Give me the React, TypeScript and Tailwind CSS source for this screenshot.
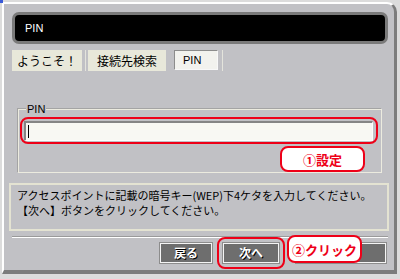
import type { ReactNode } from "react";

const JP = "font-['Noto_Sans_CJK_JP','Noto_Sans',sans-serif]";

function NavButton({ label, className = "" }: { label: string; className?: string }) {
  return (
    <div
      className={`h-[20px] flex items-center justify-center bg-[#6e6e6e] border border-[#f4f4f4] outline outline-1 outline-[#8c8c8c] text-white font-bold text-[12px] leading-none [text-shadow:1px_1px_0_#000] ${JP} ${className}`}
    >
      {label}
    </div>
  );
}

function Badge({ children, className = "" }: { children: ReactNode; className?: string }) {
  return (
    <div
      className={`flex items-center justify-center bg-white border-2 border-[#ee0018] rounded-[8px] text-[#ee0018] font-bold text-[13px] leading-none ${JP} ${className}`}
    >
      {children}
    </div>
  );
}

export default function App() {
  return (
    <div className="w-[400px] h-[279px] bg-[#dcdcdc] overflow-hidden relative">
      <span className="absolute left-0 top-0 w-[3px] h-[3px] bg-[#3a5ad8]" />
      <div className="mt-[2px] ml-[2px] w-[395px] h-[272px] bg-[#c1c1c5] border-l-2 border-t-2 border-white border-r-[3px] border-b-[4px] border-r-[#7c7c7c] border-b-[#7c7c7c] rounded-tr-[10px] pl-[8px] pr-[6px] pt-[8px] flex flex-col">
        {/* title */}
        <div className="h-[32px] bg-black border-[3px] border-[#7a7a7a] rounded-[7px] flex items-center pl-[10px] text-white text-[11px] font-['Liberation_Sans',sans-serif]">
          PIN
        </div>

        {/* tabs */}
        <div className={`mt-[6px] h-[21px] flex items-stretch text-[12px] text-black ${JP}`}>
          <div className="w-[70px] bg-[#e8e8da] flex items-center justify-center">
            ようこそ！
          </div>
          <div className="w-[6px] flex justify-center">
            <span className="w-px bg-[#e4e4dc]" />
          </div>
          <div className="w-[78px] bg-[#e8e8da] flex items-center justify-center">
            接続先検索
          </div>
          <div className="w-[8px]" />
          <div className="w-[44px] h-[20px] bg-[#f2f2ee] border border-[#8c8c8c] border-r-[#f8f8f8] border-b-[#f8f8f8] flex items-center pl-[8px] text-[11px] font-['Liberation_Sans',sans-serif]">
            PIN
          </div>
          <div className="w-[9px] flex justify-center">
            <span className="w-px bg-[#e4e4dc]" />
          </div>
        </div>

        {/* PIN group */}
        <div className="mt-[38px] mx-[6px] h-[64px] border border-[#ecebdf] shadow-[-1px_-1px_0_#a4a4a4] flex flex-col">
          <div className="-mt-[7px] ml-[7px] w-fit px-[1px] bg-[#c1c1c5] text-[11px] leading-[12px] text-black font-['Liberation_Sans',sans-serif]">
            PIN
          </div>
          <div className="mt-[2px] ml-[1px] mr-[3px] h-[30px] border-2 border-[#ee0018] rounded-[8px] pl-[2px] pr-[3px] pt-[2px]">
            <div className="h-[20px] bg-[#f8f8f3] border-t-2 border-l-2 border-[#858585] border-r border-b border-r-white border-b-white flex items-center pl-[2px]">
              <span className="w-px h-[13px] bg-black" />
            </div>
          </div>
          <div className="flex justify-end mr-[16px] mt-[2px]">
            <Badge className="w-[85px] h-[26px]">①設定</Badge>
          </div>
        </div>

        {/* message */}
        <div
          className={`mt-[10px] -ml-[3px] -mr-[1px] h-[48px] border-2 border-[#e4e3d2] pl-[6px] pt-[3px] text-[11px] leading-[15px] text-black ${JP}`}
        >
          <div>アクセスポイントに記載の暗号キー(WEP)下4ケタを入力してください。</div>
          <div>【次へ】ボタンをクリックしてください。</div>
        </div>

        {/* separator */}
        <div className="mt-[5px] h-[2px] border-t border-[#9a9a9a] border-b border-b-white" />

        {/* buttons */}
        <div className="mt-[5px] h-[20px] flex items-center justify-end pr-[2px]">
          <NavButton label="戻る" className="w-[52px]" />
          <div className="ml-[5px] w-[68px] h-[32px] border-2 border-[#ee0018] rounded-[8px] flex items-center justify-center">
            <NavButton label="次へ" className="w-[56px]" />
          </div>
          <div className="relative ml-[11px]">
            <NavButton label="" className="w-[90px]" />
            <Badge className="absolute -left-[9px] -top-[8px] w-[75px] h-[28px]">
              ②クリック
            </Badge>
          </div>
        </div>
      </div>
    </div>
  );
}
